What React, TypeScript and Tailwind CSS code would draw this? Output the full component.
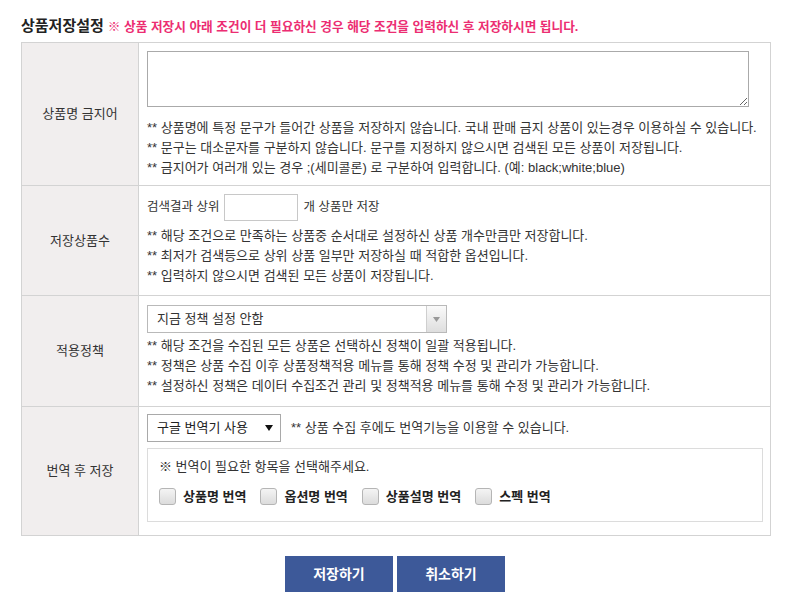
import React from "react";

const font = { fontFamily: '"Liberation Sans", "Noto Sans CJK KR", sans-serif' };

function Note({ children }: { children: React.ReactNode }) {
  return <div className="h-[20px] leading-[20px] text-[13px] text-[#333] whitespace-nowrap">** {children}</div>;
}

function Check({ label }: { label: string }) {
  return (
    <label className="flex items-center gap-[7px] mr-[14px]">
      <span className="w-[17px] h-[17px] rounded-[3px] border border-[#b5b5b5] bg-gradient-to-b from-[#f4f4f4] to-[#dcdcdc]" />
      <span className="text-[13px] font-bold text-[#222]">{label}</span>
    </label>
  );
}

export default function App() {
  return (
    <div className="w-[790px] h-[608px] bg-white" style={font}>
      <div className="pl-[21px] pt-[14px] flex items-baseline gap-[4px] h-[42px] leading-[24px]">
        <span className="text-[15px] font-bold text-[#222]">상품저장설정</span>
        <span className="text-[12.7px] font-bold text-[#ec2d72]">※ 상품 저장시 아래 조건이 더 필요하신 경우 해당 조건을 입력하신 후 저장하시면 됩니다.</span>
      </div>
      <div className="ml-[21px] w-[750px] border border-[#d3d3d3]">
        {/* row 1 */}
        <div className="flex h-[143px] border-b border-[#d3d3d3]">
          <div className="w-[117px] shrink-0 bg-[#f1eeee] border-r border-[#d3d3d3] flex items-center justify-center text-[13px] text-[#333]">상품명 금지어</div>
          <div className="flex-1 pl-[8px] pt-[8px]">
            <textarea className="block w-[602px] h-[56px] border border-[#aaa] resize-y outline-none" />
            <div className="mt-[11px]">
              <Note>상품명에 특정 문구가 들어간 상품을 저장하지 않습니다. 국내 판매 금지 상품이 있는경우 이용하실 수 있습니다.</Note>
              <Note>문구는 대소문자를 구분하지 않습니다. 문구를 지정하지 않으시면 검색된 모든 상품이 저장됩니다.</Note>
              <Note>금지어가 여러개 있는 경우 ;(세미콜론) 로 구분하여 입력합니다. (예: black;white;blue)</Note>
            </div>
          </div>
        </div>
        {/* row 2 */}
        <div className="flex h-[110px] border-b border-[#d3d3d3]">
          <div className="w-[117px] shrink-0 bg-[#f1eeee] border-r border-[#d3d3d3] flex items-center justify-center text-[13px] text-[#333]">저장상품수</div>
          <div className="flex-1 pl-[8px] pt-[8px]">
            <div className="flex items-center h-[27px] text-[12.5px] text-[#333]">
              <span>검색결과 상위</span>
              <input className="ml-[5px] mr-[5px] w-[74px] h-[27px] border border-[#c8c8c8] outline-none" />
              <span>개 상품만 저장</span>
            </div>
            <div className="mt-[5px]">
              <Note>해당 조건으로 만족하는 상품중 순서대로 설정하신 상품 개수만큼만 저장합니다.</Note>
              <Note>최저가 검색등으로 상위 상품 일부만 저장하실 때 적합한 옵션입니다.</Note>
              <Note>입력하지 않으시면 검색된 모든 상품이 저장됩니다.</Note>
            </div>
          </div>
        </div>
        {/* row 3 */}
        <div className="flex h-[111px] border-b border-[#d3d3d3]">
          <div className="w-[117px] shrink-0 bg-[#f1eeee] border-r border-[#d3d3d3] flex items-center justify-center text-[13px] text-[#333]">적용정책</div>
          <div className="flex-1 pl-[8px] pt-[9px]">
            <div className="flex w-[300px] h-[28px] border border-[#b9b9b9]">
              <div className="flex-1 flex items-center pl-[9px] text-[13px] text-[#333]">지금 정책 설정 안함</div>
              <div className="w-[20px] border-l border-[#cfcfcf] bg-gradient-to-b from-[#fafafa] to-[#dedede] flex items-center justify-center">
                <svg width="7" height="5" viewBox="0 0 7 5"><path d="M0 0h7L3.5 5z" fill="#999" /></svg>
              </div>
            </div>
            <div className="mt-[3px]">
              <Note>해당 조건을 수집된 모든 상품은 선택하신 정책이 일괄 적용됩니다.</Note>
              <Note>정책은 상품 수집 이후 상품정책적용 메뉴를 통해 정책 수정 및 관리가 가능합니다.</Note>
              <Note>설정하신 정책은 데이터 수집조건 관리 및 정책적용 메뉴를 통해 수정 및 관리가 가능합니다.</Note>
            </div>
          </div>
        </div>
        {/* row 4 */}
        <div className="flex h-[128px]">
          <div className="w-[117px] shrink-0 bg-[#f1eeee] border-r border-[#d3d3d3] flex items-center justify-center text-[13px] text-[#333]">번역 후 저장</div>
          <div className="flex-1 pl-[8px] pt-[7px]">
            <div className="flex items-center h-[28px]">
              <div className="flex items-center justify-between w-[134px] h-[28px] border border-[#a9a9a9] pl-[9px] pr-[7px] text-[13px] text-[#222]">
                <span>구글 번역기 사용</span>
                <svg width="8" height="6" viewBox="0 0 8 6"><path d="M0 0h8L4 6z" fill="#111" /></svg>
              </div>
              <span className="ml-[10px] text-[13px] text-[#333]">** 상품 수집 후에도 번역기능을 이용할 수 있습니다.</span>
            </div>
            <div className="mt-[6px] w-[616px] h-[74px] border border-[#dcdcdc] pl-[11px] pt-[8px]">
              <div className="h-[20px] leading-[20px] text-[13px] text-[#333]">※ 번역이 필요한 항목을 선택해주세요.</div>
              <div className="flex items-center mt-[10px]">
                <Check label="상품명 번역" />
                <Check label="옵션명 번역" />
                <Check label="상품설명 번역" />
                <Check label="스펙 번역" />
              </div>
            </div>
          </div>
        </div>
      </div>
      <div className="flex justify-center gap-[4px] mt-[20px]">
        <button className="w-[108px] h-[36px] bg-[#3d5999] text-white text-[14px] font-bold">저장하기</button>
        <button className="w-[108px] h-[36px] bg-[#3d5999] text-white text-[14px] font-bold">취소하기</button>
      </div>
    </div>
  );
}
